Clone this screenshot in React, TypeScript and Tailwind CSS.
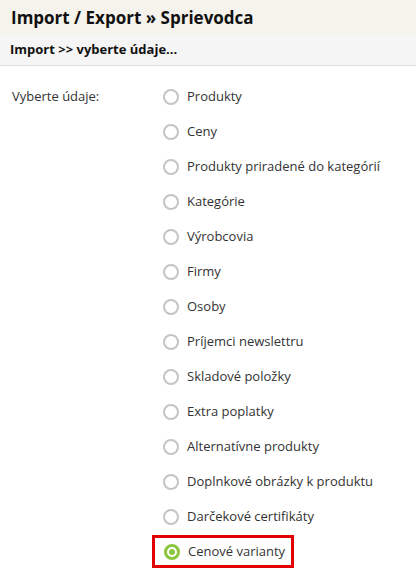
const options = [
  'Produkty',
  'Ceny',
  'Produkty priradené do kategórií',
  'Kategórie',
  'Výrobcovia',
  'Firmy',
  'Osoby',
  'Príjemci newslettru',
  'Skladové položky',
  'Extra poplatky',
  'Alternatívne produkty',
  'Doplnkové obrázky k produktu',
  'Darčekové certifikáty',
  'Cenové varianty',
];

const Radio = ({ checked }: { checked: boolean }) =>
  checked ? (
    <span className="w-4 h-4 rounded-full border-[3px] border-[#8cc63f] flex items-center justify-center shrink-0">
      <span className="w-[6px] h-[6px] rounded-full bg-[#8cc63f]" />
    </span>
  ) : (
    <span className="w-4 h-4 rounded-full border-2 border-[#c4c4c4] bg-white shrink-0" />
  );

const App = () => {
  return (
    <div className="w-[416px] h-[574px] bg-white overflow-hidden font-['Open_Sans',sans-serif] text-[#333]">
      <div className="h-[34px] bg-[#f5f3ec] px-[11px] flex items-center">
        <h1 className="text-[17px] font-bold text-[#111] leading-none">Import / Export » Sprievodca</h1>
      </div>
      <div className="h-[32px] bg-[#f5f5f5] border-b border-[#dcdcdc] px-[10px] flex items-center">
        <span className="text-[13px] font-bold text-[#111]">Import &gt;&gt; vyberte údaje...</span>
      </div>
      <div className="flex pt-[13px]">
        <div className="w-[163px] pl-[12px] h-[35px] flex items-center text-[13px]">Vyberte údaje:</div>
        <div className="flex flex-col items-start">
          {options.map((o, i) => {
            const last = i === options.length - 1;
            return (
              <div
                key={o}
                className={
                  last
                    ? 'h-[33px] -ml-[11px] pl-[9px] pr-[6px] border-[3px] border-[#e30000] flex items-center gap-[8px] mt-[1px]'
                    : 'h-[35px] flex items-center gap-[8px]'
                }
              >
                <Radio checked={last} />
                <span className="text-[13px]">{o}</span>
              </div>
            );
          })}
        </div>
      </div>
    </div>
  );
};

export default App;
